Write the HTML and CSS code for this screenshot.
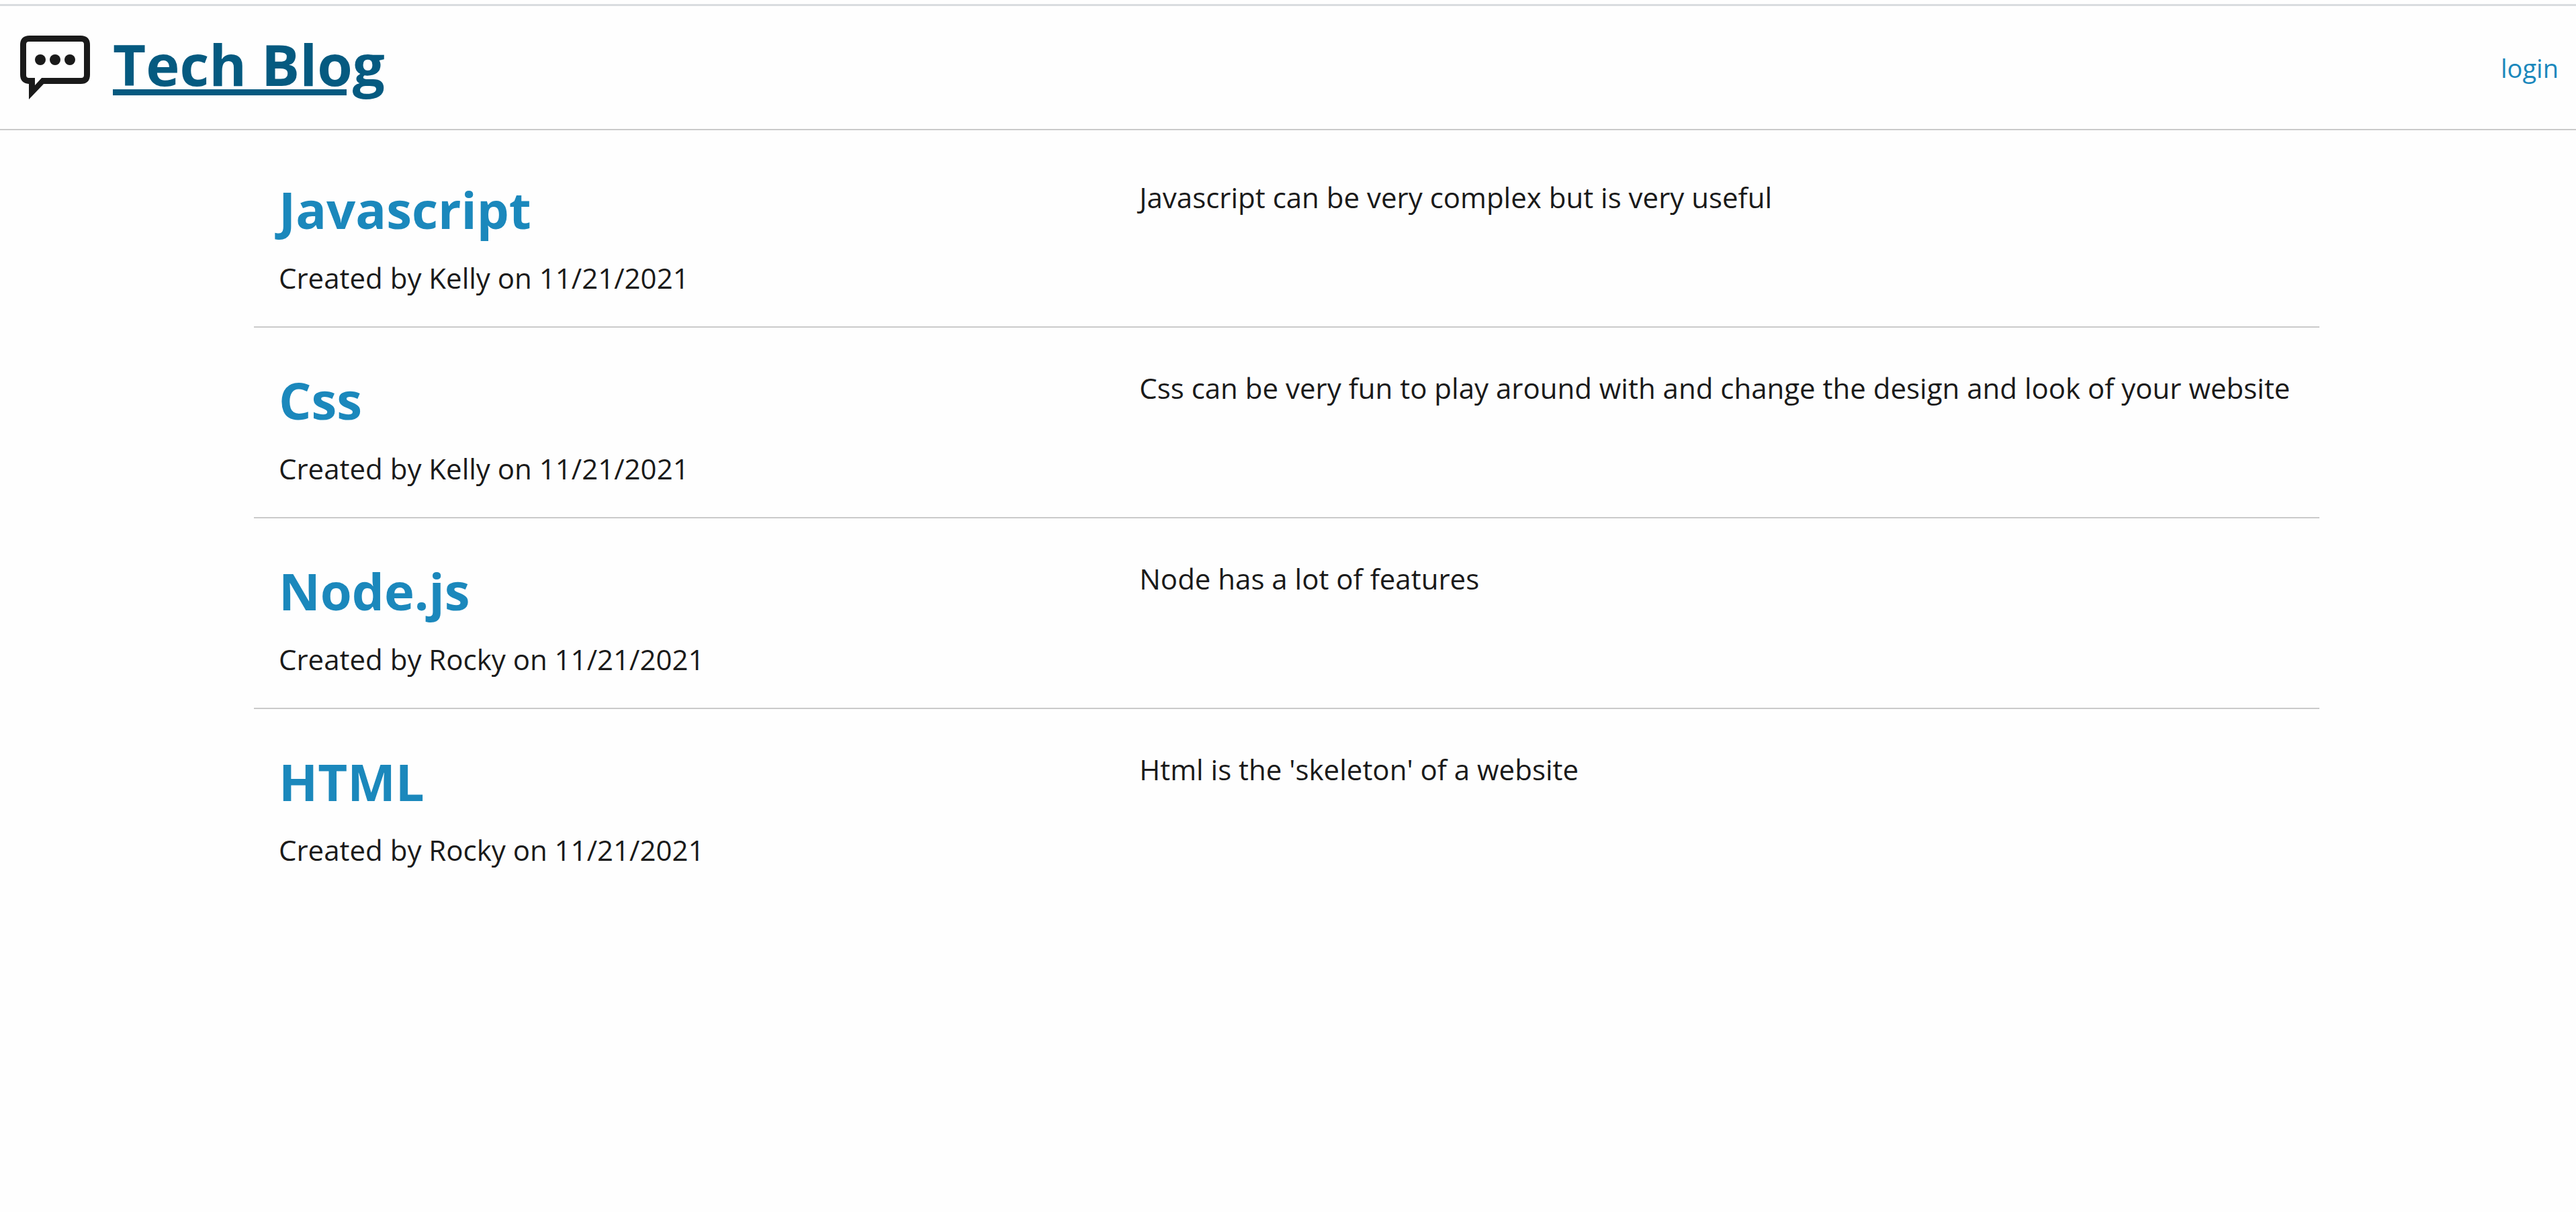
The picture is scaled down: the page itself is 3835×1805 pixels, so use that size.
FILE: index.html
```html
<!DOCTYPE html>
<html lang="en">
<head>
<meta charset="utf-8">
<title>Tech Blog</title>
<link rel="stylesheet" href="styles.css">
</head>
<body>
<header class="site-header">
  <a class="brand" href="#">
    <svg class="brand-icon" viewBox="0 0 104 96" aria-hidden="true"><path fill-rule="evenodd" d="M14 0H90Q104 0 104 14V58Q104 72 90 72H35L13 95V72Q0 71 0 58V14Q0 0 14 0ZM13 9Q9 9 9 13V59Q9 63 13 63H22V74L32 63H91Q95 63 95 59V13Q95 9 91 9Z"/><circle cx="30" cy="36" r="8"/><circle cx="52" cy="36" r="8"/><circle cx="74" cy="36" r="8"/></svg>
    <h1 class="brand-name">Tech Blog</h1>
  </a>
  <nav><a class="login" href="#">login</a></nav>
</header>
<main class="posts">
  <article class="post">
    <div class="post-head"><h2 class="post-title"><a href="#">Javascript</a></h2><p class="meta">Created by Kelly on 11/21/2021</p></div>
    <p class="excerpt">Javascript can be very complex but is very useful</p>
  </article>
  <article class="post">
    <div class="post-head"><h2 class="post-title"><a href="#">Css</a></h2><p class="meta">Created by Kelly on 11/21/2021</p></div>
    <p class="excerpt">Css can be very fun to play around with and change the design and look of your website</p>
  </article>
  <article class="post">
    <div class="post-head"><h2 class="post-title"><a href="#">Node.js</a></h2><p class="meta">Created by Rocky on 11/21/2021</p></div>
    <p class="excerpt">Node has a lot of features</p>
  </article>
  <article class="post">
    <div class="post-head"><h2 class="post-title"><a href="#">HTML</a></h2><p class="meta">Created by Rocky on 11/21/2021</p></div>
    <p class="excerpt">Html is the 'skeleton' of a website</p>
  </article>
</main>
</body>
</html>
```
FILE: styles.css
```css
* { box-sizing: border-box; }
body { margin: 0; padding-top: 6px; background: #fefefe; color: #1a1a1a; font-family: "Segoe UI", "Open Sans", "Noto Sans", sans-serif; font-size: 42px; line-height: 64px; }
h1, h2, p { margin: 0; }
a { text-decoration: none; color: #1b88bc; }
.site-header { display: flex; justify-content: space-between; align-items: center; min-height: 188px; padding: 0 26px 0 30px; border-top: 3px solid #d9dcdf; border-bottom: 2px solid #cacaca; }
.brand { display: flex; align-items: center; gap: 34px; color: #055a80; }
.brand-icon { width: 104px; height: 96px; fill: #1a1a1a; }
.brand-name { padding-bottom: 12px; font-size: 85px; line-height: 110px; text-decoration: underline; text-decoration-thickness: 9px; text-underline-offset: 5px; }
.login { font-size: 38px; }
.posts { padding: 10px 382px 0 378px; }
.post { display: grid; grid-template-columns: 5fr 7fr; padding: 58px 0 40px; }
.post:not(:last-child) { border-bottom: 2px solid #cacaca; }
.post-head, .excerpt { padding: 0 37px; }
.post-title { font-size: 76px; line-height: 100px; }
.meta { margin-top: 20px; }
@media (max-width: 2400px) {
  .posts { padding: 10px 5% 0; }
}
```
